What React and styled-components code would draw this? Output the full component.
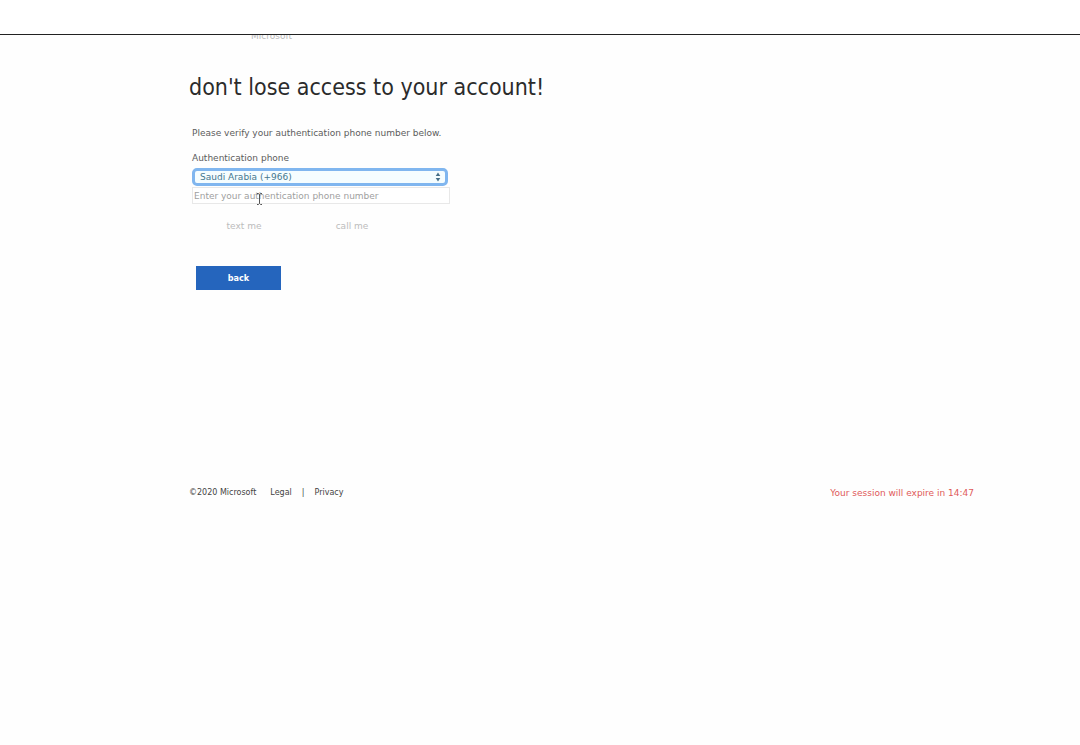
import React from 'react';
import styled, { createGlobalStyle } from 'styled-components';

const GlobalStyle = createGlobalStyle`
  *, *::before, *::after { box-sizing: border-box; }
  body {
    margin: 0;
    background: #fefefe;
    color: #5c5c5c;
    font: 9px/12px "DejaVu Sans", Verdana, sans-serif;
  }
  button, input, select { font: inherit; }
`;

const TopBar = styled.div`
  height: 35px;
  background: #fff;
  border-bottom: 1px solid #222;
`;

const Page = styled.div`
  padding: 0 106px 0 17.5%;
`;

const BrandStrip = styled.header`
  display: flex;
  align-items: flex-end;
  height: 5px;
  padding-left: 62px;
  overflow: hidden;
  color: #bbb;
  line-height: 8px;
`;

const Title = styled.h1`
  margin: 32px 0 25px;
  color: #2b2b2b;
  font: 400 23px/30px "DejaVu Sans Condensed", "DejaVu Sans", Tahoma, sans-serif;
  white-space: nowrap;
`;

const Form = styled.form`
  padding-left: 3px;
  width: 261px;
`;

const Intro = styled.p`
  margin: 0 0 13px;
  white-space: nowrap;
`;

const Label = styled.label`
  display: block;
  margin-bottom: 4px;
`;

const Field = styled.div`
  position: relative;
`;

const CountrySelect = styled.select`
  display: block;
  width: 256px;
  height: 18px;
  padding: 0 5px;
  appearance: none;
  border: 3px solid #80b6ef;
  border-radius: 5px;
  outline: none;
  background: #f5fdff;
  color: #45788f;
`;

const Arrows = styled.svg`
  position: absolute;
  top: 4px;
  left: 243px;
  pointer-events: none;
`;

const PhoneInput = styled.input`
  display: block;
  width: 258px;
  height: 17px;
  margin-top: 1px;
  padding: 0 1px;
  border: 1px solid #e8e8e8;
  outline: none;
  background: #fff;
  color: #555;
  &::placeholder { color: #a0a0a0; opacity: 1; }
`;

const TextCursor = styled.svg`
  position: absolute;
  top: 5px;
  left: 64px;
  pointer-events: none;
`;

const Actions = styled.div`
  display: flex;
  gap: 22px;
  margin: 10px 0 28px 9px;
`;

const PlainButton = styled.button`
  width: 86px;
  height: 24px;
  padding: 0;
  border: 0;
  background: transparent;
  color: #bcbcbc;
`;

const BackButton = styled.button`
  display: block;
  width: 85px;
  height: 24px;
  margin-left: 4px;
  padding: 0;
  border: 0;
  background: #2565bd;
  color: #fff;
  font-family: "DejaVu Sans Condensed", "DejaVu Sans", sans-serif;
  font-weight: 700;
`;

const Footer = styled.footer`
  display: flex;
  justify-content: space-between;
  margin-top: 197px;
  color: #444;
  font-size: 8px;
`;

const FooterLinks = styled.nav`
  display: flex;
`;

const Copyright = styled.span`
  margin-right: 14px;
`;

const Divider = styled.span`
  margin: 0 10px;
`;

const FooterLink = styled.a`
  color: inherit;
  text-decoration: none;
`;

const Session = styled.span`
  color: #e05a5a;
  font-size: 9px;
`;

export default function App() {
  return (
    <>
      <GlobalStyle />
      <TopBar />
      <Page>
        <BrandStrip>Microsoft</BrandStrip>
        <main>
          <Title>don't lose access to your account!</Title>
          <Form onSubmit={(e) => e.preventDefault()}>
            <Intro>Please verify your authentication phone number below.</Intro>
            <Label htmlFor="country">Authentication phone</Label>
            <Field>
              <CountrySelect id="country" defaultValue="966">
                <option value="966">Saudi Arabia (+966)</option>
              </CountrySelect>
              <Arrows width="6" height="10" viewBox="0 0 6 10" fill="#456f88" aria-hidden="true">
                <path d="M3 0.5 5.3 4H0.7ZM3 9.5 0.7 6H5.3Z" />
              </Arrows>
            </Field>
            <Field>
              <PhoneInput
                type="tel"
                aria-label="Authentication phone number"
                placeholder="Enter your authentication phone number"
              />
              <TextCursor width="7" height="14" viewBox="0 0 7 14" fill="none" stroke="#555" aria-hidden="true">
                <path d="M1 1.5H2.5L3.5 2.5 4.5 1.5H6M3.5 2.5V11.5M1 12.5H2.5L3.5 11.5 4.5 12.5H6" />
              </TextCursor>
            </Field>
            <Actions>
              <PlainButton type="submit" disabled>text me</PlainButton>
              <PlainButton type="submit" disabled>call me</PlainButton>
            </Actions>
            <BackButton type="button">back</BackButton>
          </Form>
        </main>
        <Footer>
          <FooterLinks>
            <Copyright>©2020 Microsoft</Copyright>
            <FooterLink href="#legal">Legal</FooterLink>
            <Divider>|</Divider>
            <FooterLink href="#privacy">Privacy</FooterLink>
          </FooterLinks>
          <Session>Your session will expire in 14:47</Session>
        </Footer>
      </Page>
    </>
  );
}
